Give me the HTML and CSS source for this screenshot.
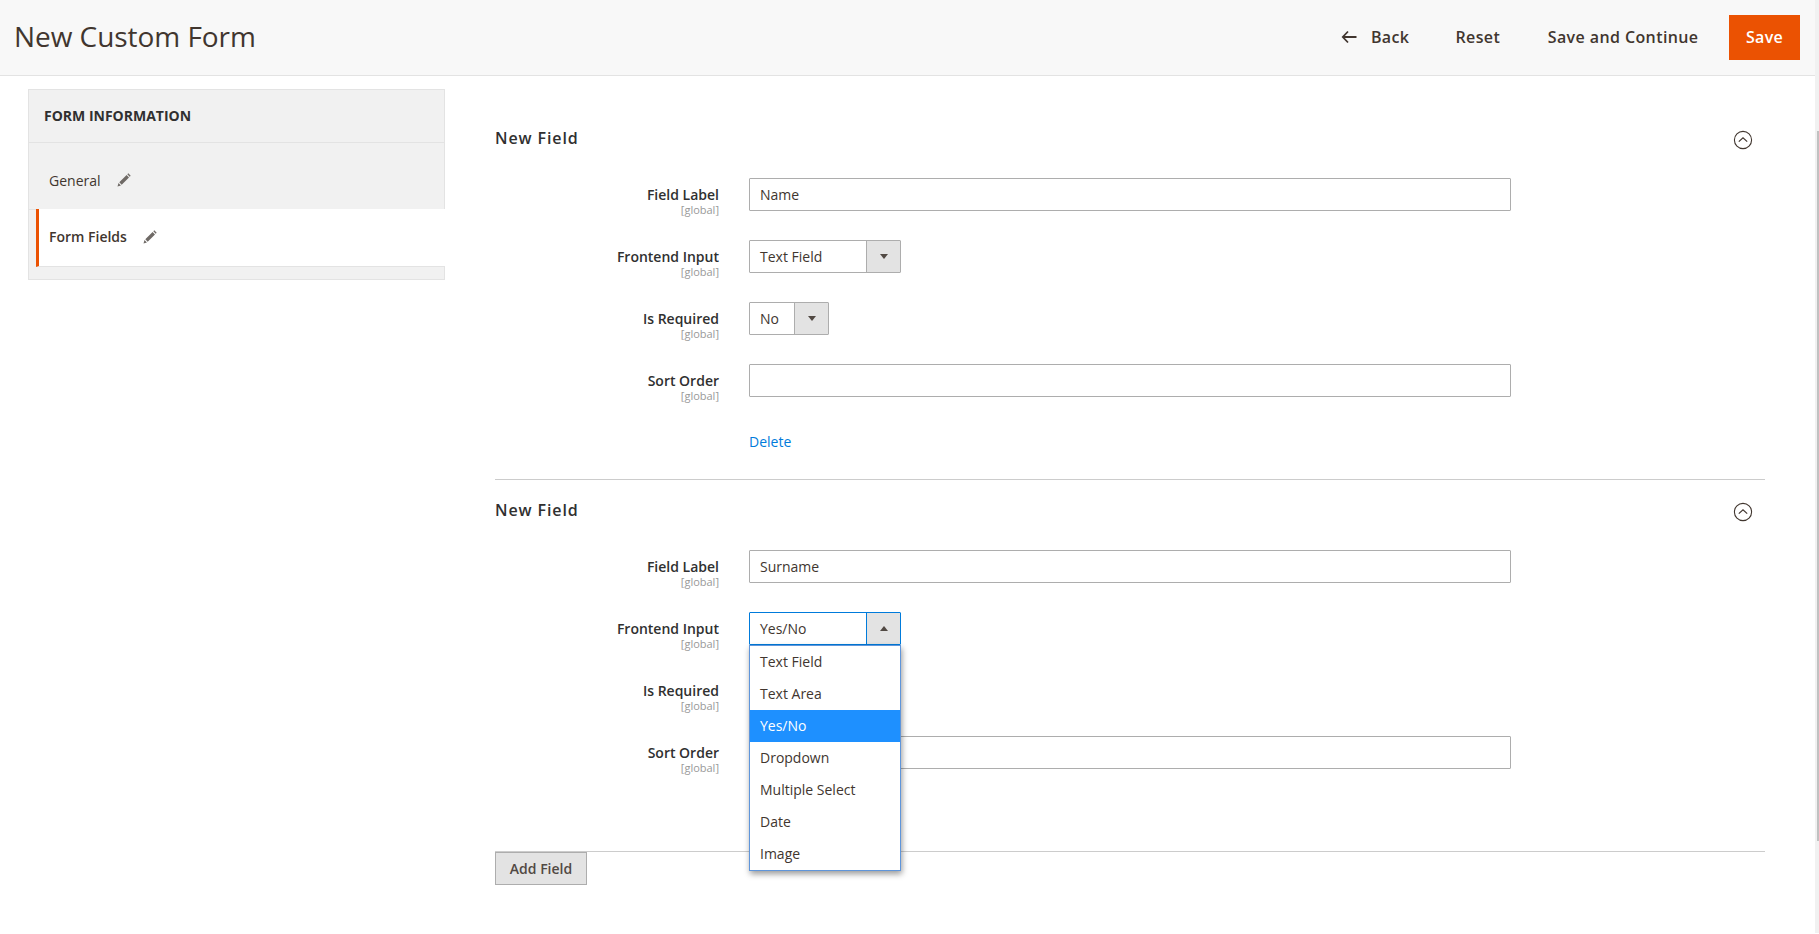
FILE: index.html
```html
<!DOCTYPE html>
<html lang="en">
<head>
<meta charset="utf-8">
<title>New Custom Form</title>
<link rel="stylesheet" href="styles.css">
</head>
<body>
<div class="viewport">
  <div class="page">
    <header class="page-head">
      <h1 class="page-title">New Custom Form</h1>
      <div class="actions">
        <button class="action back" type="button">
          <svg class="back-icon" viewBox="0 0 16 14" width="16" height="14"><path d="M7 1.5 1.8 7 7 12.5M2 7h13.5" fill="none" stroke="#41362f" stroke-width="1.8"/></svg>
          Back
        </button>
        <button class="action" type="button">Reset</button>
        <button class="action" type="button">Save and Continue</button>
        <button class="primary" type="button">Save</button>
      </div>
    </header>
    <div class="content">
      <aside class="side">
        <div class="side-panel">
          <div class="side-title">FORM INFORMATION</div>
          <div class="side-item">General
            <svg class="pencil" viewBox="0 0 14 14" width="14" height="14"><path d="M.5 13.5l1-3.4 2.4 2.4zM2.3 9.3 9.6 2l2.4 2.4-7.3 7.3zM10.3 1.3l1-1 2.4 2.4-1 1z" fill="#6f6a66"/></svg>
          </div>
          <div class="side-item active">Form Fields
            <svg class="pencil" viewBox="0 0 14 14" width="14" height="14"><path d="M.5 13.5l1-3.4 2.4 2.4zM2.3 9.3 9.6 2l2.4 2.4-7.3 7.3zM10.3 1.3l1-1 2.4 2.4-1 1z" fill="#6f6a66"/></svg>
          </div>
          <div class="side-foot"></div>
        </div>
      </aside>
      <main class="main">
        <section class="field first">
          <div class="field-head">
            <h2 class="field-title">New Field</h2>
            <svg class="collapse" viewBox="0 0 20 20" width="20" height="20"><circle cx="10" cy="10" r="8.6" fill="none" stroke="#41362f" stroke-width="1.1"/><path d="M5.8 11.6 10 7.8l4.2 3.8" fill="none" stroke="#41362f" stroke-width="1.2"/></svg>
          </div>
          <div class="row">
            <label class="label">Field Label<span class="scope">[global]</span></label>
            <input class="input" type="text" value="Name">
          </div>
          <div class="row">
            <label class="label">Frontend Input<span class="scope">[global]</span></label>
            <div class="select wide"><span class="select-value">Text Field</span><span class="select-arrow"><i class="caret"></i></span></div>
          </div>
          <div class="row">
            <label class="label">Is Required<span class="scope">[global]</span></label>
            <div class="select narrow"><span class="select-value">No</span><span class="select-arrow"><i class="caret"></i></span></div>
          </div>
          <div class="row">
            <label class="label">Sort Order<span class="scope">[global]</span></label>
            <input class="input" type="text">
          </div>
          <div class="delete-row"><a class="delete" href="#">Delete</a></div>
        </section>
        <section class="field second">
          <div class="field-head">
            <h2 class="field-title">New Field</h2>
            <svg class="collapse" viewBox="0 0 20 20" width="20" height="20"><circle cx="10" cy="10" r="8.6" fill="none" stroke="#41362f" stroke-width="1.1"/><path d="M5.8 11.6 10 7.8l4.2 3.8" fill="none" stroke="#41362f" stroke-width="1.2"/></svg>
          </div>
          <div class="row">
            <label class="label">Field Label<span class="scope">[global]</span></label>
            <input class="input" type="text" value="Surname">
          </div>
          <div class="row">
            <label class="label">Frontend Input<span class="scope">[global]</span></label>
            <div class="select wide open">
              <span class="select-value">Yes/No</span><span class="select-arrow"><i class="caret up"></i></span>
              <ul class="menu">
                <li>Text Field</li>
                <li>Text Area</li>
                <li class="selected">Yes/No</li>
                <li>Dropdown</li>
                <li>Multiple Select</li>
                <li>Date</li>
                <li>Image</li>
              </ul>
            </div>
          </div>
          <div class="row">
            <label class="label">Is Required<span class="scope">[global]</span></label>
          </div>
          <div class="row">
            <label class="label">Sort Order<span class="scope">[global]</span></label>
            <input class="input" type="text">
          </div>
        </section>
        <div class="add-row"><button class="add" type="button">Add Field</button></div>
      </main>
    </div>
  </div>
  <div class="scrollbar"><div class="thumb"></div></div>
</div>
</body>
</html>
```
FILE: styles.css
```css
* { box-sizing: border-box; }
html, body { margin: 0; height: 100%; overflow: hidden; }
body { font-family: "Open Sans", sans-serif; font-size: 14px; color: #41362f; background: #fff; }
button, input { font-family: inherit; }
.viewport { display: flex; height: 934px; }
.page { flex: 1; min-width: 0; }
.scrollbar { width: 4px; height: 933px; background: #f1f1f1; padding-left: 2px; }
.thumb { height: 710px; margin-top: 131px; background: #c1c1c1; }

.page-head { height: 76px; display: flex; align-items: center; justify-content: space-between; padding: 0 15px 0 14px; background: #f8f8f8; border-bottom: 1px solid #e3e3e3; }
.page-title { margin: 0 0 3px; font-size: 28px; font-weight: 400; line-height: 36px; letter-spacing: -.05px; color: #41362f; }
.actions { display: flex; align-items: center; }
.action { display: flex; align-items: center; gap: 14px; height: 45px; padding: 0 0 2px; margin-right: 47.5px; border: 0; background: none; color: #41362f; font-size: 16px; font-weight: 600; letter-spacing: .4px; }
.action.back { margin-right: 46px; }
.action:nth-child(3) { margin-right: 30.5px; }
.back-icon { display: block; }
.primary { width: 71px; height: 45px; padding: 0 0 2px; border: 0; background: #eb5202; color: #fff; font-size: 16px; font-weight: 600; letter-spacing: .3px; }

.content { display: flex; }
.side { width: 495px; padding: 13px 50px 0 28px; flex: none; }
.side-panel { background: #f1f1f1; border: 1px solid #e3e3e3; }
.side-title { height: 53px; line-height: 52px; padding-left: 15px; font-weight: 700; border-bottom: 1px solid #e3e3e3; color: #303030; }
.side-item { display: flex; align-items: center; gap: 16px; height: 67px; padding: 8px 0 0 20px; border-bottom: 1px solid #e3e3e3; }
.side-item.active { height: 58px; padding: 0 0 2px 10px; margin: -1px -1px 0 7px; background: #fff; border-left: 3px solid #eb5202; font-weight: 600; }
.side-foot { height: 12px; }
.pencil { display: block; }

.main { flex: 1; padding-right: 50px; }
.field { border-bottom: 1px solid #cccccc; }
.field.first { height: 404px; padding-top: 48px; }
.field.second { height: 372px; padding-top: 16px; }
.field-head { display: flex; justify-content: space-between; align-items: center; height: 28px; margin-bottom: 26px; padding-right: 12px; }
.field-title { margin: 0; font-size: 16px; font-weight: 600; letter-spacing: .9px; color: #303030; }
.collapse { margin-top: 4px; }
.row { display: flex; gap: 30px; height: 33px; margin-bottom: 29px; }
.label { width: 224px; flex: none; text-align: right; font-weight: 600; line-height: 20px; padding-top: 7px; color: #303030; }
.scope { display: block; font-size: 11px; font-weight: 400; line-height: 11px; margin-top: -1px; color: #999; }
.input { width: 762px; height: 33px; padding: 0 10px; border: 1px solid #adadad; border-radius: 1px; font-size: 14px; color: #41362f; background: #fff; outline: 0; }
.select { position: relative; display: flex; height: 33px; border: 1px solid #adadad; border-radius: 1px; background: #fff; }
.select.wide { width: 152px; }
.select.narrow { width: 80px; }
.select-value { flex: 1; line-height: 31px; padding-left: 10px; }
.select-arrow { width: 34px; display: flex; align-items: center; justify-content: center; background: #e3e3e3; border-left: 1px solid #adadad; }
.caret { width: 0; height: 0; border: 4px solid transparent; border-top: 5px solid #514943; border-bottom: 0; }
.caret.up { border-top: 0; border-bottom: 5px solid #514943; }
.select.open { border-color: #007bdb; }
.select.open .select-arrow { border-left-color: #007bdb; }
.menu { position: absolute; z-index: 2; top: 32px; left: -1px; width: 152px; margin: 0; padding: 0; list-style: none; background: #fff; border: 1px solid #5f95da; box-shadow: 1px 3px 6px rgba(0,0,0,.4); }
.menu li { height: 32px; line-height: 32px; padding-left: 10px; }
.menu .selected { background: #1e90ff; color: #fff; }
.delete-row { padding: 6px 0 0 254px; }
.delete { color: #007bdb; text-decoration: none; }
.add { display: block; width: 92px; height: 33px; padding: 0; background: #e3e3e3; border: 1px solid #adadad; color: #514943; font-size: 14px; font-weight: 600; }
```
